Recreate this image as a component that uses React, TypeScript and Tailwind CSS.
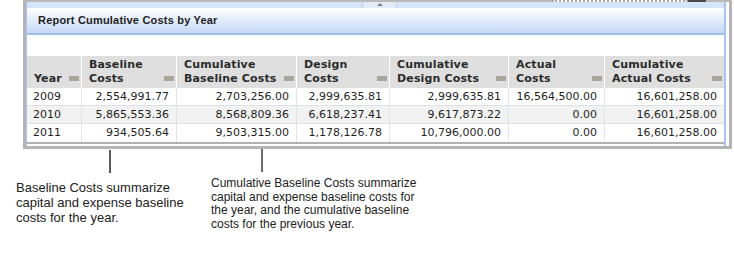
import React from "react";

const cols = [
  { w: "w-[55px]", label: ["Year"] },
  { w: "w-[95px]", label: ["Baseline", "Costs"] },
  { w: "w-[120px]", label: ["Cumulative", "Baseline Costs"] },
  { w: "w-[93px]", label: ["Design", "Costs"] },
  { w: "w-[119px]", label: ["Cumulative", "Design Costs"] },
  { w: "w-[96px]", label: ["Actual", "Costs"] },
  { w: "w-[119px]", label: ["Cumulative", "Actual Costs"] },
];

const rows = [
  ["2009", "2,554,991.77", "2,703,256.00", "2,999,635.81", "2,999,635.81", "16,564,500.00", "16,601,258.00"],
  ["2010", "5,865,553.36", "8,568,809.36", "6,618,237.41", "9,617,873.22", "0.00", "16,601,258.00"],
  ["2011", "934,505.64", "9,503,315.00", "1,178,126.78", "10,796,000.00", "0.00", "16,601,258.00"],
];

export default function App() {
  return (
    <div className="w-[734px] h-[272px] bg-white overflow-hidden">
      {/* report panel */}
      <div className="ml-[23px] w-[709px] border-x-[3px] border-b-[3px] border-[#b4b4b4]">
        {/* top edge */}
        <div className="flex h-[2px]">
          <div className="w-[526px] bg-[#b8b8b8]" />
          <div className="w-[136px] border-t-2 border-dotted border-[#a8a8a8]" />
          <div className="w-[18px] bg-[#4a4a4a]" />
          <div className="flex-1 bg-[#b8b8b8]" />
        </div>
        <div className="mr-[3px] border-l border-r-2 border-[#a9c4ef]">
          <div className="flex h-[6px] bg-[#d5e4f8]">
            <div className="ml-[335px] flex h-[6px] w-[35px] justify-center rounded-t-[3px] border-x border-[#c4d2e6] bg-[#e3ecf9] pt-[1px]">
              <div className="h-0 w-0 border-x-[3px] border-b-[3px] border-x-transparent border-b-[#7c7c7c]" />
            </div>
          </div>
          <div className="h-[27px] border-b-2 border-[#9fbeef] bg-linear-to-b from-white to-[#c3d8f7] pl-[11px] pt-[5px] font-['Liberation_Sans',Arial,sans-serif] text-[11px] font-bold leading-[14px] tracking-[0.2px] text-[#1e1e1e]">
            Report Cumulative Costs by Year
          </div>
          <div className="h-[21px]" />
          <div className="border-b-2 border-[#b0b0b0] font-['DejaVu_Sans',Verdana,sans-serif] text-[11px]">
            <div className="flex h-[32px] bg-[#dfdfdf]">
              {cols.map((c, i) => (
                <div
                  key={i}
                  className={`${c.w} flex items-end justify-between pl-[7px] pr-[2px] pb-[2px] ${i < cols.length - 1 ? "border-r border-white" : ""}`}
                >
                  <div className="font-bold leading-[14px] tracking-[0.15px] text-[#2b2b2b]">
                    {c.label.map((l) => (
                      <div key={l} className="whitespace-nowrap">{l}</div>
                    ))}
                  </div>
                  <div className="mb-[5px] h-[5px] w-[10px] shrink-0 bg-[#a8a69a]" />
                </div>
              ))}
            </div>
            {rows.map((r, ri) => (
              <div
                key={ri}
                className={`flex h-[18px] text-[#1f1f1f] ${ri === 1 ? "bg-[#f2f2f2]" : "bg-white"} ${ri < rows.length - 1 ? "border-b border-[#dde2ea]" : ""}`}
              >
                {r.map((v, ci) => (
                  <div
                    key={ci}
                    className={`${cols[ci].w} leading-[17px] whitespace-nowrap ${ci === 0 ? "pl-[6px] text-left" : "pr-[7px] text-right"} ${ci < r.length - 1 ? "border-r border-[#e4e4e4]" : ""}`}
                  >
                    {v}
                  </div>
                ))}
              </div>
            ))}
          </div>
          <div className="h-[2px]" />
        </div>
      </div>

      {/* callout leaders */}
      <div className="flex h-[24px] items-start">
        <div className="ml-[109px] mt-[1px] h-[23px] w-[2px] bg-[#5a5a5a]" />
        <div className="ml-[150px] h-[23px] w-[2px] bg-[#6a6a6a]" />
      </div>

      {/* callout texts */}
      <div className="flex items-start font-['Liberation_Sans',Arial,sans-serif] text-[#222]">
        <p className="ml-[16px] mt-[7px] w-[195px] text-[13px] leading-[15px]">
          Baseline Costs summarize
          <br />
          capital and expense baseline
          <br />
          costs for the year.
        </p>
        <p className="mt-[4px] text-[12px] leading-[13.7px]">
          Cumulative Baseline Costs summarize
          <br />
          capital and expense baseline costs for
          <br />
          the year, and the cumulative baseline
          <br />
          costs for the previous year.
        </p>
      </div>
    </div>
  );
}
